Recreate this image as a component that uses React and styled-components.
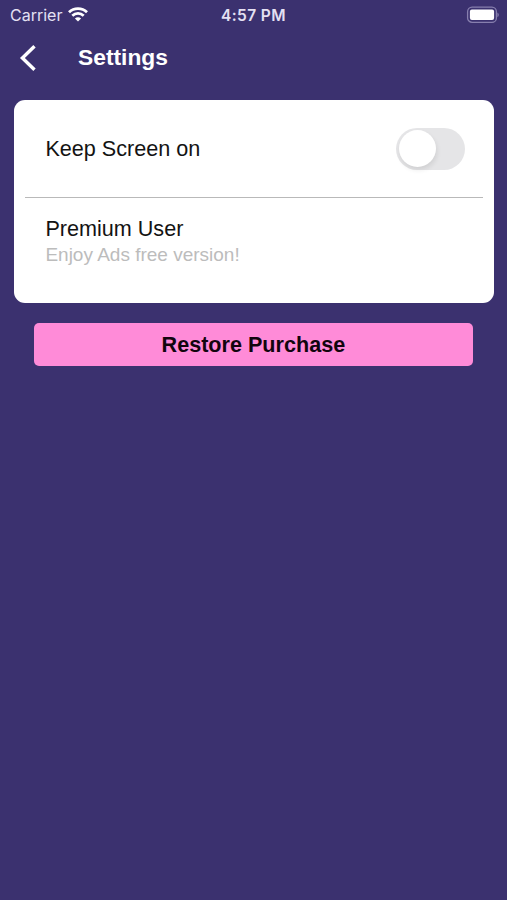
import React from "react";
import styled, { createGlobalStyle } from "styled-components";

const GlobalStyle = createGlobalStyle`
  * { box-sizing: border-box; }
  body {
    margin: 0;
    background: #3b316f;
    font-family: "Liberation Sans", Arial, sans-serif;
  }
`;

const Screen = styled.main`
  height: 900px;
  background: #3b316f;
  overflow: hidden;
`;

const StatusBar = styled.div`
  height: 30px;
  padding: 0 8px 0 10px;
  display: grid;
  grid-template-columns: 211px auto 1fr;
  align-items: center;
  font-family: Inter, sans-serif;
  font-size: 16px;
  line-height: 30px;
  color: #e4e0f3;
`;

const CarrierGroup = styled.div`
  display: flex;
  align-items: center;
  gap: 6px;
  letter-spacing: 0;
  svg { margin-top: -1px; }
`;

const Clock = styled.div`
  padding-top: 2px;
  line-height: 28px;
  font-weight: 600;
  font-size: 15.5px;
  letter-spacing: 0.4px;
`;

const Battery = styled.svg`
  justify-self: end;
  display: block;
  margin-top: -1px;
`;

const Header = styled.header`
  height: 55px;
  padding-left: 19px;
  display: flex;
  align-items: center;
`;

const BackButton = styled.button`
  width: 59px;
  height: 28px;
  padding: 0;
  border: 0;
  background: none;
  svg { display: block; }
`;

const Title = styled.h1`
  margin: 0 0 2px;
  font-size: 22.8px;
  line-height: 28px;
  font-weight: 700;
  color: #fff;
`;

const Card = styled.section`
  margin: 15.4px 0 0 14.4px;
  width: 479.2px;
  height: 202.4px;
  padding: 0 11px;
  border-radius: 11px;
  background: #fff;
`;

const SettingRow = styled.div`
  height: 98px;
  padding: 0 17.2px 0 20px;
  display: flex;
  align-items: center;
  justify-content: space-between;
  border-bottom: 1.5px solid #b9b9b9;
`;

const Label = styled.div`
  font-size: 21.6px;
  line-height: 26px;
  color: #131313;
`;

const Toggle = styled.button`
  width: 69px;
  height: 42px;
  padding: 2px 2px 2px 2.5px;
  border: 0;
  border-radius: 21px;
  background: #e5e5e7;
`;

const Knob = styled.span`
  display: block;
  width: 37px;
  height: 37px;
  border-radius: 50%;
  background: #fff;
  box-shadow: 1px 3px 5px rgba(0, 0, 0, 0.09);
`;

const PremiumRow = styled.div`
  padding: 17.6px 20px 0;
`;

const Caption = styled.div`
  font-size: 19px;
  line-height: 26px;
  color: #bcbcbc;
`;

const RestoreButton = styled.button`
  display: block;
  width: 439px;
  height: 43.8px;
  margin: 19.8px 0 0 34.4px;
  padding: 0 1px 0 0;
  border: 0;
  border-radius: 5px;
  background: #ff8bd8;
  font-family: inherit;
  font-size: 21.6px;
  line-height: 43px;
  font-weight: 700;
  color: #12050e;
`;

export default function App() {
  return (
    <>
      <GlobalStyle />
      <Screen>
        <StatusBar>
          <CarrierGroup>
            <span>Carrier</span>
            <svg width="20" height="15" viewBox="0 0 20 15" fill="none" stroke="#fff" strokeWidth="2.8">
              <path d="M1 5.2C6 .4 14 .4 19 5.2" />
              <path d="M4.3 8.7C7.6 5.6 12.4 5.6 15.7 8.7" />
              <path d="M10 14.6L6.9 11.4C8.7 9.8 11.3 9.8 13.1 11.4Z" fill="#fff" stroke="none" />
            </svg>
          </CarrierGroup>
          <Clock>4:57 PM</Clock>
          <Battery width="33" height="18" viewBox="0 0 33 18">
            <rect x="1.6" y="1.2" width="28.8" height="15.2" rx="4.5" fill="none" stroke="#877fae" strokeWidth="1.3" />
            <rect x="3.9" y="3.5" width="24.2" height="10.6" rx="2" fill="#fff" />
            <path d="M31.4 6.4Q32.8 7.2 32.8 8.8T31.4 11.2Z" fill="#877fae" />
          </Battery>
        </StatusBar>
        <Header>
          <BackButton aria-label="Back">
            <svg width="20" height="28" viewBox="0 0 20 28" fill="none" stroke="#fff" strokeWidth="3.4">
              <path d="M15.5 2.2L3.4 14L15.5 25.8" />
            </svg>
          </BackButton>
          <Title>Settings</Title>
        </Header>
        <Card>
          <SettingRow>
            <Label>Keep Screen on</Label>
            <Toggle role="switch" aria-checked="false" aria-label="Keep Screen on">
              <Knob />
            </Toggle>
          </SettingRow>
          <PremiumRow>
            <Label>Premium User</Label>
            <Caption>Enjoy Ads free version!</Caption>
          </PremiumRow>
        </Card>
        <RestoreButton>Restore Purchase</RestoreButton>
      </Screen>
    </>
  );
}
